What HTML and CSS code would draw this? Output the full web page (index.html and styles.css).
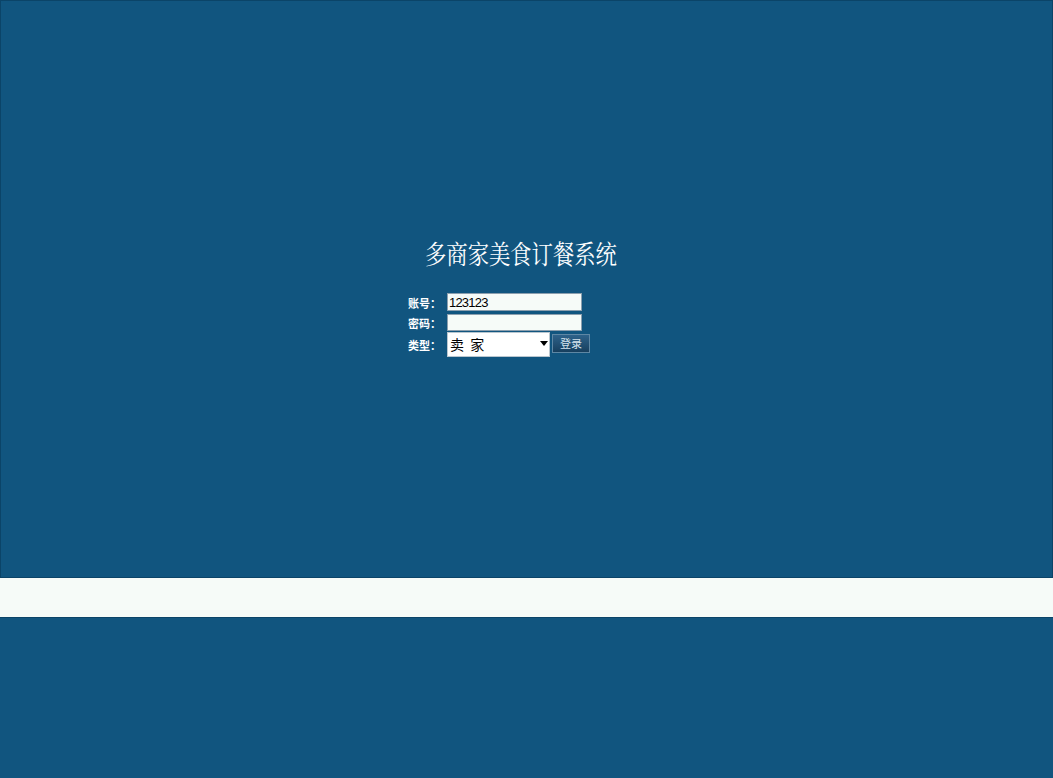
FILE: index.html
```html
<!DOCTYPE html>
<html lang="zh">
<head>
<meta charset="utf-8">
<title>多商家美食订餐系统</title>
<link rel="stylesheet" href="styles.css">
</head>
<body>
<div class="page">
  <div class="top">
    <div class="login">
      <h1 class="title"><span class="title-text">多商家美食订餐系统</span></h1>
      <div class="form">
        <label class="lbl r1">账号：</label>
        <input class="field r1" type="text" value="123123">
        <label class="lbl r2">密码：</label>
        <input class="field r2" type="password" value="">
        <label class="lbl r3">类型：</label>
        <div class="select-wrap r3">
          <select class="sel">
            <option>卖&nbsp;&nbsp;家</option>
            <option>买&nbsp;&nbsp;家</option>
          </select>
        </div>
        <button class="btn r3" type="button">登录</button>
      </div>
    </div>
  </div>
  <div class="band"></div>
  <div class="bottom"></div>
</div>
</body>
</html>
```

FILE: styles.css
```css
html, body {
  margin: 0;
  padding: 0;
  height: 100%;
  background: #11557f;
}
body {
  font-family: "Noto Sans CJK SC", "Liberation Sans", sans-serif;
}
.page {
  height: 778px;
  display: flex;
  flex-direction: column;
}
.top {
  height: 577px;
  flex: none;
  background: #11557f;
  box-sizing: border-box;
  border: 1px solid #0b4468;
  border-bottom: none;
  padding-top: 231px;
}
.login {
  margin-left: 407px;
  width: 240px;
}
.title {
  margin: 0;
  height: 40px;
  font-weight: normal;
  font-size: 26px;
  line-height: 40px;
  color: #ffffff;
  font-family: "Noto Serif CJK SC", "Noto Sans CJK SC", serif;
  white-space: nowrap;
}
.title-text {
  display: inline-block;
  transform: scaleX(0.82);
  transform-origin: left center;
  margin-left: 17px;
  margin-top: 1px;
}
.form {
  margin-top: 21px;
  display: grid;
  grid-template-columns: 39px 102px 3px auto;
  grid-template-rows: 18px 20px 25px;
  align-items: center;
}
.r1 { grid-row: 1; }
.r2 { grid-row: 2; align-self: end; }
.r3 { grid-row: 3; }
.lbl { grid-column: 1; }
.field { grid-column: 2 / 5; }
.select-wrap { grid-column: 2; }
.btn { grid-column: 4; }
.lbl {
  color: #ffffff;
  font-size: 11px;
  font-weight: bold;
  line-height: 14px;
  white-space: nowrap;
  padding-top: 2px;
}
.lbl.r2 { padding-top: 0; margin-bottom: 1px; }
.field {
  width: 135px;
  height: 17px;
  box-sizing: border-box;
  border: 1px solid #8c9fae;
  background: #f6fbf8;
  margin: 0;
  padding: 0 1px;
  font-family: "Liberation Sans Narrow", "Liberation Sans", sans-serif;
  font-size: 13px;
  letter-spacing: -0.8px;
  color: #000;
  outline: none;
}
.field.r1 { height: 18px; }
.select-wrap {
  position: relative;
  width: 103px;
  height: 25px;
}
.sel {
  appearance: none;
  -webkit-appearance: none;
  width: 103px;
  height: 25px;
  box-sizing: border-box;
  border: 1px solid #b9c6cf;
  background: #ffffff;
  margin: 0;
  padding: 0 0 0 2px;
  font-family: "Noto Sans CJK SC", sans-serif;
  font-size: 14px;
  color: #000;
  outline: none;
}
.select-wrap::after {
  content: "";
  position: absolute;
  right: 2px;
  top: 10px;
  border-left: 4px solid transparent;
  border-right: 4px solid transparent;
  border-top: 5px solid #000;
}
.btn {
  width: 38px;
  height: 19px;
  box-sizing: border-box;
  border: 1px solid #5e87a4;
  background: linear-gradient(#2e628a, #173f5e);
  color: #d6e4ee;
  font-family: "Noto Sans CJK SC", sans-serif;
  font-size: 11px;
  line-height: 15px;
  padding: 0;
  margin: 0;
}
.band {
  flex: none;
  height: 39px;
  background: #f6fbf8;
  border-top: 1px solid #0b4468;
  border-bottom: 1px solid #0b4468;
}
.bottom {
  flex: 1;
  background: #11557f;
}
```
